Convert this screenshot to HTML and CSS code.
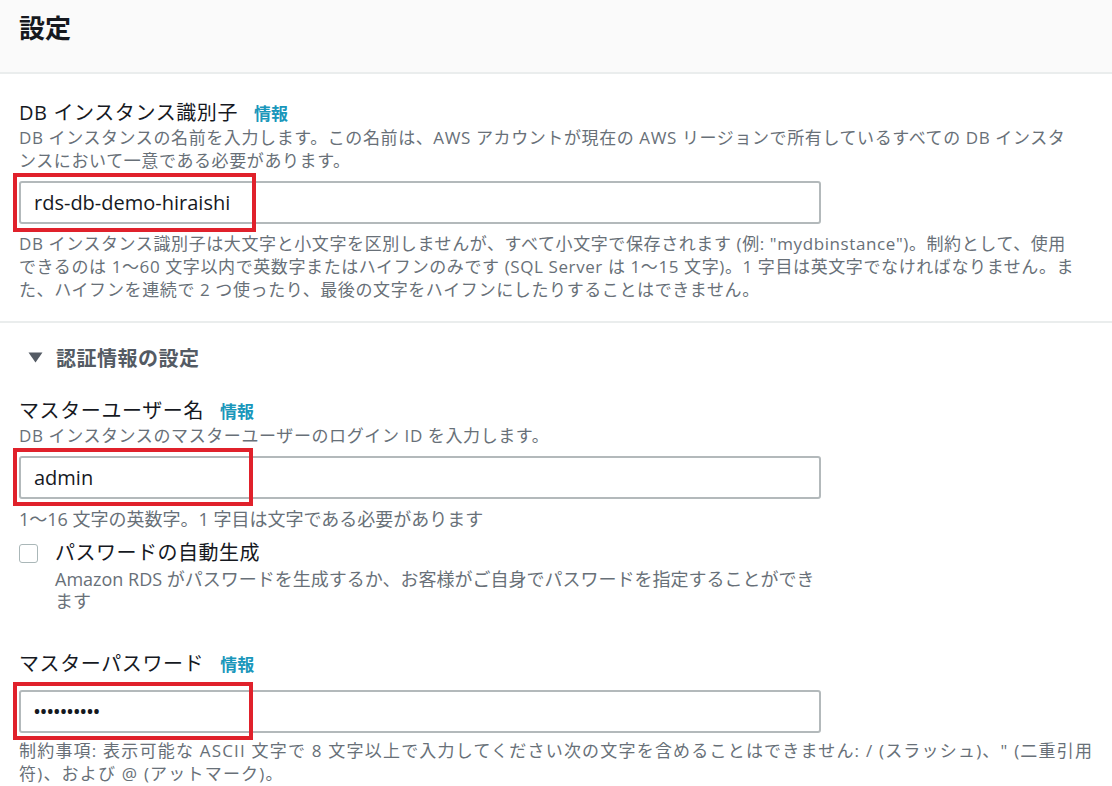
FILE: index.html
```html
<!DOCTYPE html>
<html lang="ja">
<head>
<meta charset="utf-8">
<title>設定</title>
<link rel="stylesheet" href="styles.css">
</head>
<body>
<div class="panel">
  <div class="panel-header"><h2 class="panel-title">設定</h2></div>

  <div class="section">
    <div class="field field-first">
      <div class="label">DB インスタンス識別子<a class="info">情報</a></div>
      <div class="desc">DB インスタンスの名前を入力します。この名前は、AWS アカウントが現在の AWS リージョンで所有しているすべての DB インスタ<br>ンスにおいて一意である必要があります。</div>
      <div class="input-wrap">
        <div class="input">rds-db-demo-hiraishi</div>
        <div class="highlight"></div>
      </div>
      <div class="desc constraint">DB インスタンス識別子は大文字と小文字を区別しませんが、すべて小文字で保存されます (例: "mydbinstance")。制約として、使用<br>できるのは 1～60 文字以内で英数字またはハイフンのみです (SQL Server は 1～15 文字)。1 字目は英文字でなければなりません。ま<br>た、ハイフンを連続で 2 つ使ったり、最後の文字をハイフンにしたりすることはできません。</div>
    </div>
  </div>

  <div class="section">
    <div class="expander">
      <svg class="caret" width="15" height="11" viewBox="0 0 15 11"><path d="M0.5 0.5 L14.5 0.5 L7.5 10.5 Z" fill="#545b64"/></svg>
      <span>認証情報の設定</span>
    </div>

    <div class="field">
      <div class="label">マスターユーザー名<a class="info">情報</a></div>
      <div class="desc">DB インスタンスのマスターユーザーのログイン ID を入力します。</div>
      <div class="input-wrap">
        <div class="input">admin</div>
        <div class="highlight hl-short"></div>
      </div>
      <div class="hint">1～16 文字の英数字。1 字目は文字である必要があります</div>
    </div>

    <div class="checkbox-row">
      <div class="checkbox"></div>
      <div class="checkbox-body">
        <div class="checkbox-label">パスワードの自動生成</div>
        <div class="hint hint-sub">Amazon RDS がパスワードを生成するか、お客様がご自身でパスワードを指定することができ<br>ます</div>
      </div>
    </div>

    <div class="field field-pw">
      <div class="label">マスターパスワード<a class="info">情報</a></div>
      <div class="input-wrap input-pw">
        <div class="input dots">••••••••••</div>
        <div class="highlight hl-short"></div>
      </div>
      <div class="desc constraint-pw">制約事項: 表示可能な ASCII 文字で 8 文字以上で入力してください次の文字を含めることはできません: / (スラッシュ)、" (二重引用<br>符)、および @ (アットマーク)。</div>
    </div>
  </div>
</div>
</body>
</html>
```

FILE: styles.css
```css
html, body {
  margin: 0;
  padding: 0;
  background: #ffffff;
}

body {
  font-family: "Open Sans", "Noto Sans CJK JP", sans-serif;
  color: #16191f;
  width: 1112px;
  height: 786px;
  overflow: hidden;
}

.panel-header {
  height: 72px;
  background: #fafafa;
  border-bottom: 2px solid #eaeded;
  padding: 0 19px;
  display: flex;
  align-items: center;
}

.panel-title {
  margin: 0;
  font-size: 26px;
  font-weight: 700;
  line-height: 32px;
  margin-top: -18px;
  color: #16191f;
  font-family: "Noto Sans CJK JP", sans-serif;
}

.section {
  padding: 0 19px;
}

.section + .section {
  border-top: 2px solid #eaeded;
}

.field-first {
  padding-top: 27px;
  padding-bottom: 20px;
}

.label {
  font-size: 20px;
  letter-spacing: 0.6px;
  line-height: 24px;
  color: #16191f;
  white-space: nowrap;
}

.info {
  font-size: 17px;
  letter-spacing: 0;
  font-weight: 700;
  color: #1a97bb;
  margin-left: 16px;
}

.desc {
  font-size: 17px;
  letter-spacing: 0.6px;
  line-height: 23px;
  color: #687078;
  white-space: nowrap;
}

.input-wrap {
  position: relative;
  width: 802px;
  margin-top: 9px;
}

.input {
  box-sizing: border-box;
  height: 43px;
  border: 2px solid #b3b9bb;
  border-radius: 3px;
  padding: 0 13px;
  font-size: 20px;
  line-height: 39px;
  color: #16191f;
  background: #fff;
}

.dots {
  font-size: 16px;
  font-weight: 700;
  letter-spacing: 0.6px;
}

.highlight {
  position: absolute;
  left: -6px;
  top: -8px;
  width: 235px;
  height: 51px;
  border: 4px solid #e0212b;
}

.hl-short {
  width: 232px;
  top: -8px;
  height: 50px;
}

.constraint {
  margin-top: 8px;
}

.expander {
  display: flex;
  align-items: center;
  height: 24px;
  margin-top: 22px;
  font-size: 20px;
  letter-spacing: 0.5px;
  font-weight: 700;
  color: #545b64;
  font-family: "Noto Sans CJK JP", sans-serif;
}

.caret {
  margin-left: 9px;
  margin-right: 13px;
}

.field {
  margin-top: 30px;
}

.field-first {
  margin-top: 0;
}

.hint {
  font-size: 18px;
  line-height: 23px;
  color: #687078;
  white-space: nowrap;
  margin-top: 9px;
}

.hint-sub {
  line-height: 22px;
  margin-top: 2px;
}

.checkbox-row {
  display: flex;
  margin-top: 9px;
}

.checkbox {
  box-sizing: border-box;
  width: 19px;
  height: 19px;
  border: 1px solid #aab7b8;
  border-radius: 3px;
  margin-top: 4px;
  background: #fff;
}

.checkbox-body {
  margin-left: 17px;
}

.checkbox-label {
  font-size: 20px;
  letter-spacing: 0.5px;
  line-height: 26px;
  color: #16191f;
}

.field-pw {
  margin-top: 40px;
}

.input-pw {
  margin-top: 13px;
}

.constraint-pw {
  margin-top: 6px;
  letter-spacing: 1.2px;
}
```
